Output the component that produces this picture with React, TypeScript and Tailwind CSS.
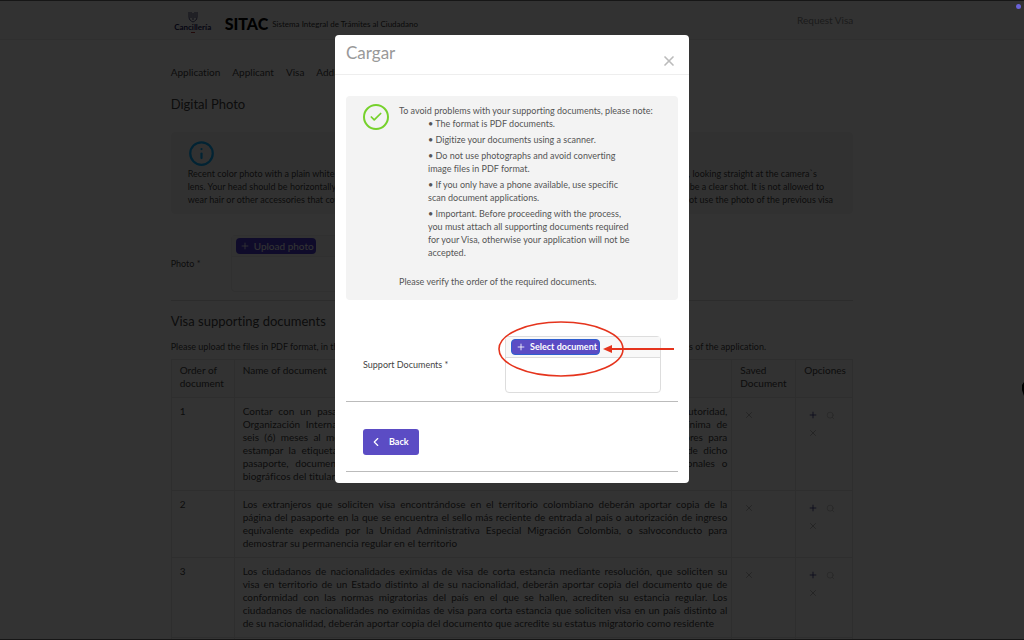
import { Check, ChevronLeft, Info, Plus, Search, X } from "lucide-react";

const tabs = ["Application", "Applicant", "Visa", "Additional information"];

const photoRules = [
  "Recent color photo with a plain white background, in front view with the face centered, eyes open and clearly visible, no glasses, looking straight at the camera`s",
  "lens. Your head should be horizontally centered, free of shadows and reflections, and the photo must be sharp and in focus, and be a clear shot. It is not allowed to",
  "wear hair or other accessories that cover the face. The photo must have been taken within the last six months, and you should not use the photo of the previous visa",
];

const documents = [
  [
    "Contar con un pasaporte, documento de viaje o libreta vigente, expedido por la respectiva autoridad,",
    "Organización Internacional o Estado reconocido por el Gobierno de Colombia, con vigencia mínima de",
    "seis (6) meses al momento de la solicitud de visa y con al menos dos páginas en blanco y libres para",
    "estampar la etiqueta de la visa. Se debe aportar copia de la página principal y de los datos de dicho",
    "pasaporte, documento de viaje o libreta vigente, en donde aparezcan todos los datos personales o",
    "biográficos del titular",
  ],
  [
    "Los extranjeros que soliciten visa encontrándose en el territorio colombiano deberán aportar copia de la",
    "página del pasaporte en la que se encuentra el sello más reciente de entrada al país o autorización de ingreso",
    "equivalente expedida por la Unidad Administrativa Especial Migración Colombia, o salvoconducto para",
    "demostrar su permanencia regular en el territorio",
  ],
  [
    "Los ciudadanos de nacionalidades eximidas de visa de corta estancia mediante resolución, que soliciten su",
    "visa en territorio de un Estado distinto al de su nacionalidad, deberán aportar copia del documento que de",
    "conformidad con las normas migratorias del país en el que se hallen, acrediten su estancia regular. Los",
    "ciudadanos de nacionalidades no eximidas de visa para corta estancia que soliciten visa en un país distinto al",
    "de su nacionalidad, deberán aportar copia del documento que acredite su estatus migratorio como residente",
  ],
];

const notes = [
  "The format is PDF documents.",
  "Digitize your documents using a scanner.",
  "Do not use photographs and avoid converting image files in PDF format.",
  "If you only have a phone available, use specific scan document applications.",
  "Important. Before proceeding with the process, you must attach all supporting documents required for your Visa, otherwise your application will not be accepted.",
];

function Logo() {
  return (
    <div className="flex w-11 flex-col items-center pt-1 text-[#20205c]">
      <svg width="10" height="12" viewBox="0 0 10 12" fill="none" stroke="currentColor" strokeWidth="0.8">
        <path d="M1 1v5c0 3 2 4 4 5c2-1 4-2 4-5V1M3 1v6M7 1v6M5 2v7" />
      </svg>
      <span className="text-[8px] leading-[9px] font-bold">Cancillería</span>
      <span className="h-px w-1 bg-[#aa3333]" />
    </div>
  );
}

function Header() {
  return (
    <header className="h-10 border-b border-[#ececec] bg-[#fafafa]">
      <div className="mx-auto flex h-full w-2/3 items-center">
        <Logo />
        <span className="ml-[10px] pt-2 text-[16px] leading-5 font-black text-black">SITAC</span>
        <span className="ml-1 pt-2 text-[8px] leading-5 whitespace-nowrap text-[#333]">
          Sistema Integral de Trámites al Ciudadano
        </span>
        <a href="#visa" className="ml-auto text-[10px] leading-4 text-[#888]">
          Request Visa
        </a>
      </div>
    </header>
  );
}

function DocumentTable() {
  return (
    <table className="mt-1.5 w-full table-fixed border-collapse text-left text-[10px] leading-[13px]">
      <colgroup>
        <col className="w-[63px]" />
        <col />
        <col className="w-16" />
        <col className="w-[57px]" />
      </colgroup>
      <thead>
        <tr className="h-[38px] bg-[#f7f7f7] align-top">
          {["Order of document", "Name of document", "Saved Document", "Opciones"].map((title) => (
            <th key={title} className="border border-[#e6e6e6] px-2 py-1 font-normal">
              {title}
            </th>
          ))}
        </tr>
      </thead>
      <tbody>
        {documents.map((lines, i) => (
          <tr key={i} className="align-top">
            <td className="border border-[#e6e6e6] px-2 pt-[7px]">{i + 1}</td>
            <td className="border border-[#e6e6e6] py-[7px] pr-1 pl-2">
              {lines.map((line) => (
                <span key={line} className="block text-justify [text-align-last:justify] last:[text-align-last:left]">
                  {line}
                </span>
              ))}
            </td>
            <td className="border border-[#e6e6e6] px-3 pt-3 text-[#aaa]">
              <X size={10} />
            </td>
            <td className="border border-[#e6e6e6] px-3 pt-3">
              <div className="grid w-7 grid-cols-2 gap-2">
                <button type="button" aria-label="Add document" className="text-[#333388]">
                  <Plus size={10} />
                </button>
                <button type="button" aria-label="View document" className="text-[#aaa]">
                  <Search size={9} strokeWidth={1.5} />
                </button>
                <button type="button" aria-label="Remove document" className="text-[#aaa]">
                  <X size={10} />
                </button>
              </div>
            </td>
          </tr>
        ))}
        <tr>
          <td className="h-4 border border-[#e6e6e6]" />
          <td className="border border-[#e6e6e6]" />
          <td className="border border-[#e6e6e6]" />
          <td className="border border-[#e6e6e6]" />
        </tr>
      </tbody>
    </table>
  );
}

function UploadDialog() {
  return (
    <div
      role="dialog"
      aria-labelledby="dialog-title"
      className="mx-auto mt-[34px] w-[354px] rounded bg-white pb-[11px] text-[#555]"
    >
      <div className="flex h-10 justify-between border-b border-[#eee] pr-3 pl-[11px]">
        <h2 id="dialog-title" className="pt-2 text-[17px] leading-5 text-[#999]">
          Cargar
        </h2>
        <button type="button" aria-label="Close" className="pt-3 text-[#bbb]">
          <X size={16} strokeWidth={2.5} />
        </button>
      </div>

      <div className="px-[11px] pt-[21px]">
        <div className="flex rounded bg-[#f3f3f3] pt-2 pb-3 pl-[17px] text-[9px] leading-[13px]">
          <span className="flex size-[26px] shrink-0 items-center justify-center rounded-full border-2 border-[#76d12c] text-[#76d12c]">
            <Check size={14} strokeWidth={3} />
          </span>
          <div className="ml-[10px]">
            <p>To avoid problems with your supporting documents, please note:</p>
            <ul className="ml-[29px] w-[206px] space-y-[3px]">
              {notes.map((note) => (
                <li key={note}>{`• ${note}`}</li>
              ))}
            </ul>
            <p className="mt-4">Please verify the order of the required documents.</p>
          </div>
        </div>

        <div className="mt-9 flex items-center justify-between border-b border-[#bbb] px-[17px] pb-2">
          <label htmlFor="select-document" className="text-[9px] leading-[13px] text-[#444]">
            Support Documents *
          </label>
          <div className="relative w-[156px] rounded-sm border border-[#ddd]">
            <div className="border-b border-[#ddd] bg-[#f8f8f8] px-[5px] py-[2px]">
              <button
                id="select-document"
                type="button"
                className="flex h-4 items-center gap-1 rounded-sm border border-[#2f5fd0] bg-[#5b4cc4] pr-0.5 pl-1 text-[9px] leading-3 font-bold whitespace-nowrap text-white"
              >
                <Plus size={10} />
                Select document
              </button>
            </div>
            <div className="h-[34px]" />
            <svg
              className="absolute -top-4 -left-2 text-[#e5341d]"
              width="178"
              height="57"
              viewBox="0 0 178 57"
              fill="none"
              stroke="currentColor"
            >
              <ellipse cx="63" cy="28" rx="62" ry="27" strokeWidth="1.6" />
              <path d="M112 28h64" strokeWidth="1.8" />
              <path d="M105 28l9-4v8z" fill="currentColor" stroke="none" />
            </svg>
          </div>
        </div>

        <div className="border-b border-[#bbb] px-[17px] pt-[27px] pb-4">
          <button
            type="button"
            className="flex h-[26px] w-14 items-center gap-1.5 rounded-[3px] bg-[#5b4cc4] pl-1.5 text-[9px] font-bold text-white"
          >
            <ChevronLeft size={14} />
            Back
          </button>
        </div>
      </div>
    </div>
  );
}

export default function App() {
  return (
    <div className="relative h-screen overflow-hidden bg-white font-[Lato,sans-serif] text-[#444] [font-variant-ligatures:no-common-ligatures]">
      <Header />
      <main className="mx-auto w-2/3">
        <nav className="flex gap-3 pt-6 text-[10px] leading-4">
          {tabs.map((tab) => (
            <a key={tab} href="#visa">
              {tab}
            </a>
          ))}
        </nav>

        <h1 className="mt-4 text-[13px] leading-4">Digital Photo</h1>

        <section className="mt-5 rounded bg-[#f6f6f6] px-[17px] py-2 text-[9px] leading-[13px]">
          <Info size={27} strokeWidth={2} className="text-[#0bb0ff]" />
          {photoRules.map((rule) => (
            <p key={rule} className="whitespace-nowrap">
              {rule}
            </p>
          ))}
        </section>

        <section className="mt-[21px] flex items-center border-b border-[#ddd] pb-2">
          <label htmlFor="upload-photo" className="w-[60px] text-[9px]">
            Photo *
          </label>
          <div className="w-40 rounded-sm border border-[#eee]">
            <div className="border-b border-[#eee] bg-[#f8f8f8] px-1 py-[2px]">
              <button
                id="upload-photo"
                type="button"
                className="flex h-4 items-center gap-1 rounded-sm bg-[#4b3bd0] pr-0.5 pl-1 text-[10px] text-white"
              >
                <Plus size={10} />
                Upload photo
              </button>
            </div>
            <div className="h-[34px]" />
          </div>
        </section>

        <h2 className="mt-3 text-[13px] leading-4">Visa supporting documents</h2>
        <p className="mt-[11px] text-[9px] leading-[13px]">
          Please upload the files in PDF format, in the order listed below. Each file must be legible and complete, and
          meet all of the conditions of the application.
        </p>
        <DocumentTable />
      </main>

      <div className="fixed inset-0 border-y border-[#161616] bg-black/80">
        <UploadDialog />
        <span className="absolute top-[3px] right-[3px] size-[5px] rounded-full bg-[#6a62d8]" />
        <svg className="absolute top-[381px] right-0" width="2" height="14" viewBox="0 0 2 14">
          <path d="M2 0L0 3v5l2 6z" fill="#000" />
        </svg>
      </div>
    </div>
  );
}
